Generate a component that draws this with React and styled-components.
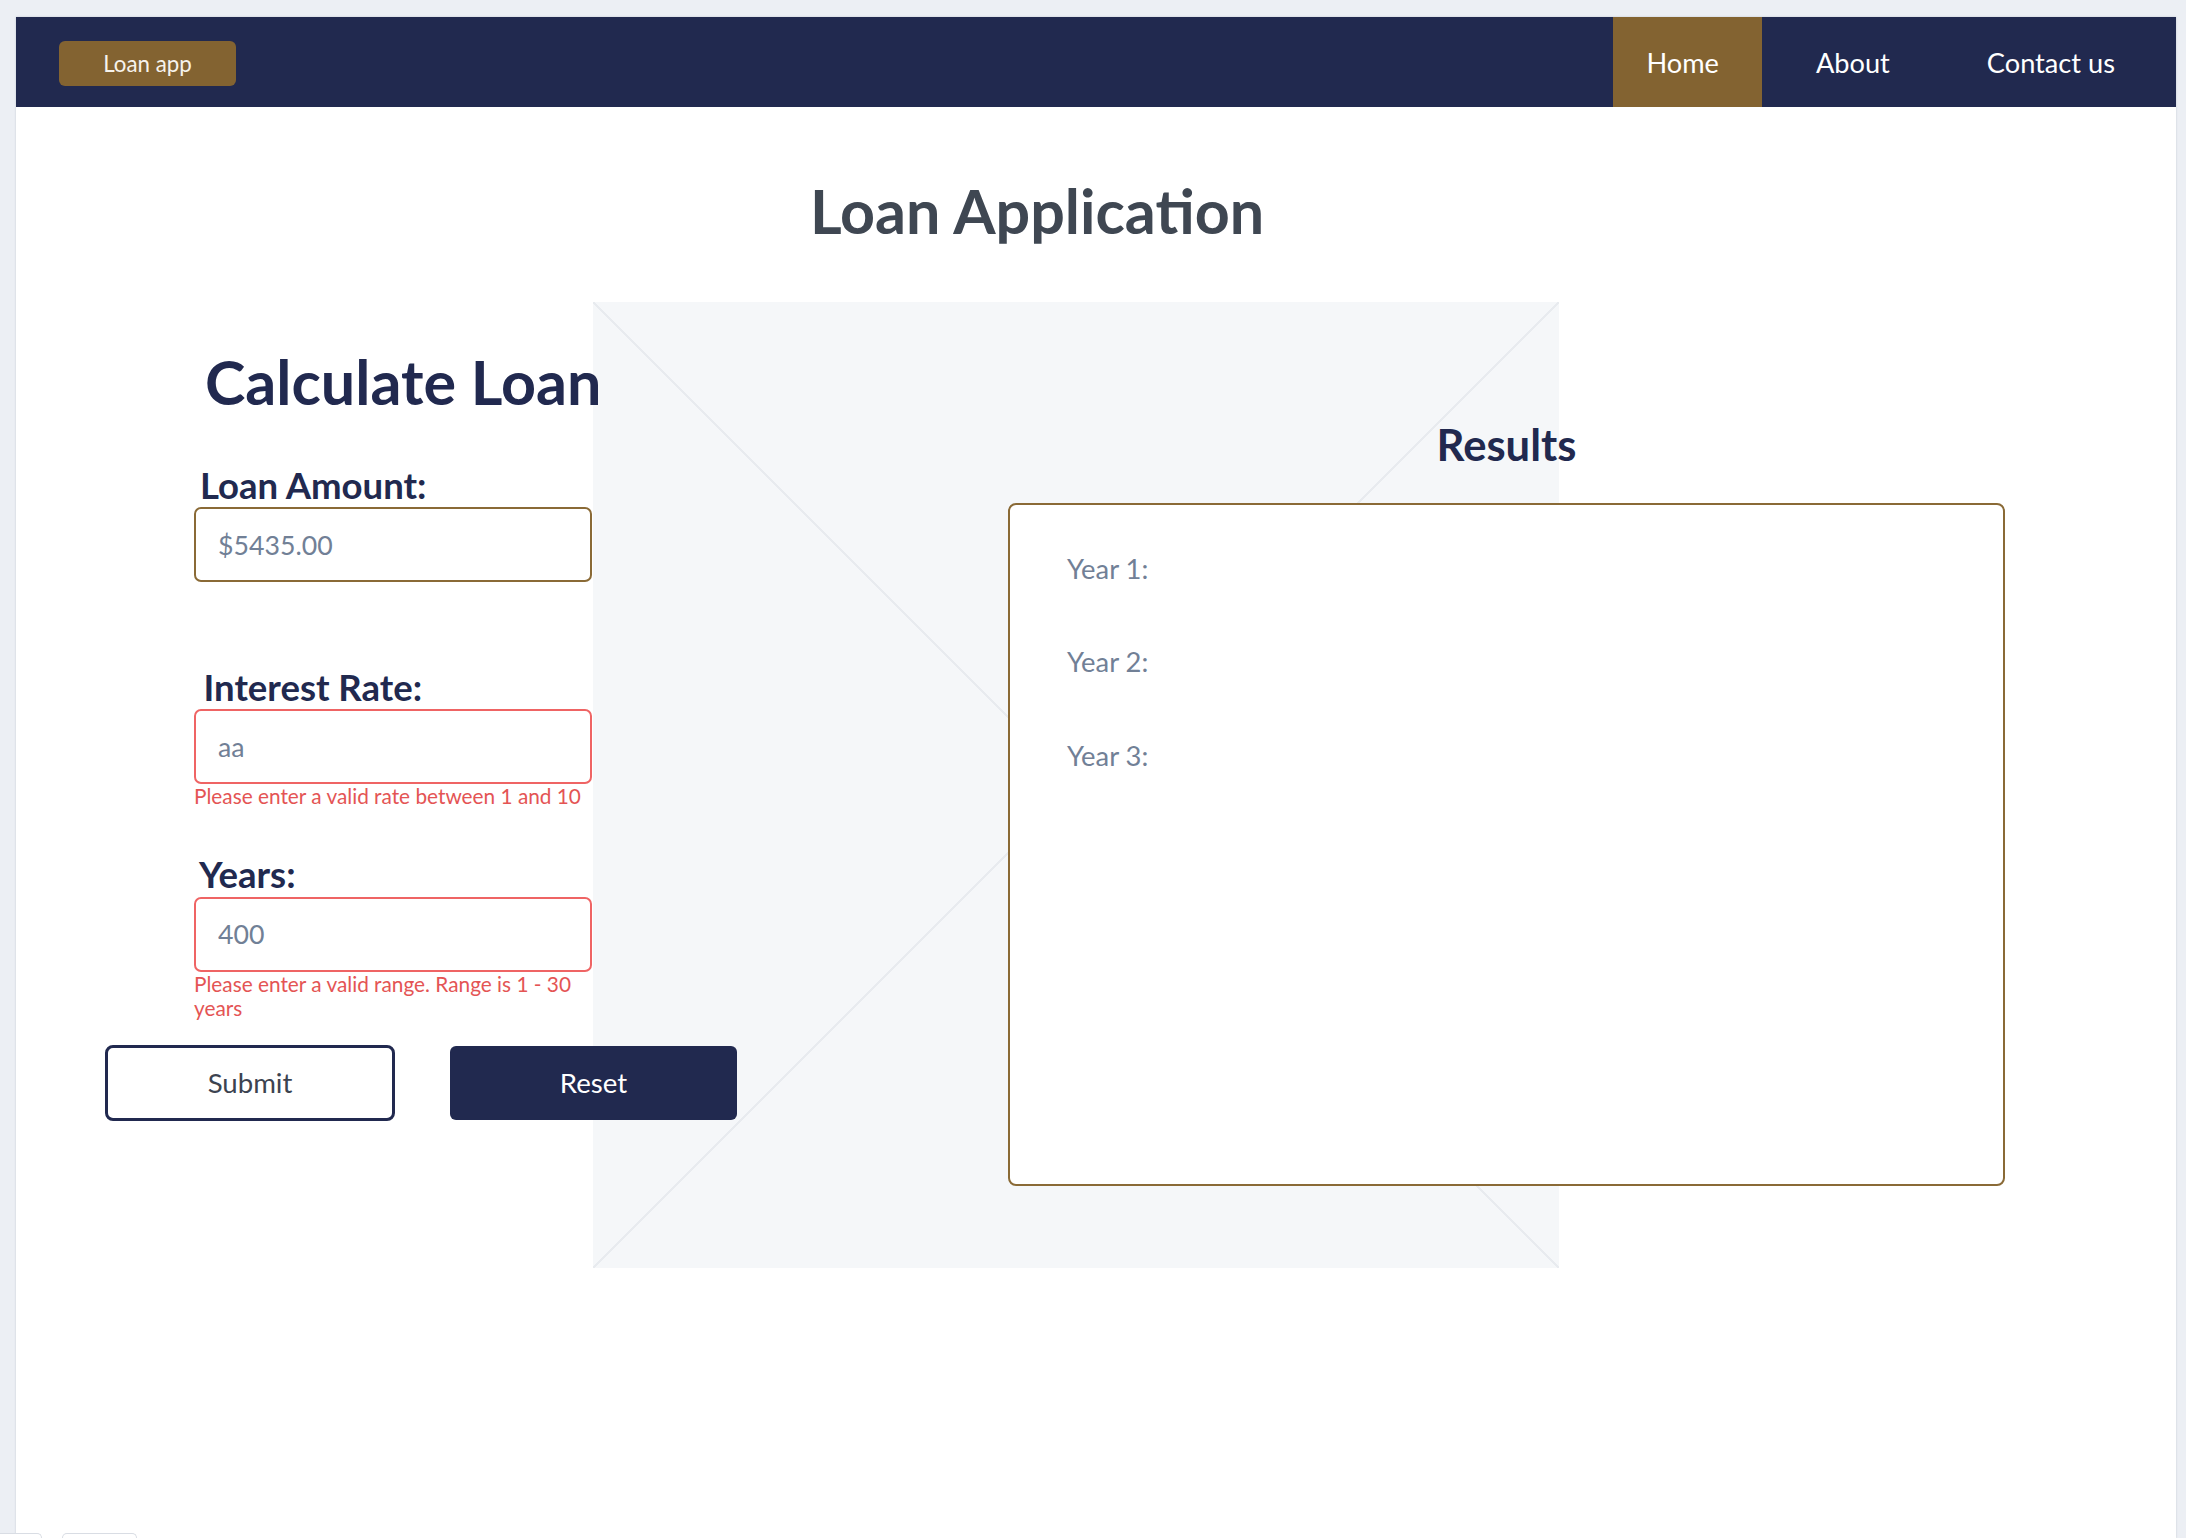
import React from 'react';
import styled, { createGlobalStyle } from 'styled-components';

const GlobalStyle = createGlobalStyle`
  html, body {
    margin: 0;
    padding: 0;
    background: #eceff4;
    overflow: hidden;
    font-family: Lato, "Noto Sans", sans-serif;
  }
  * {
    box-sizing: border-box;
  }
`

const Frame = styled.div`
  margin: 17px 0 0 16px;
  width: 2160px;
  min-height: 1521px;
  background: #fff;
  box-shadow: 0 0 2px rgba(40, 50, 80, 0.2);
`

const NavBar = styled.nav`
  display: flex;
  align-items: stretch;
  height: 90px;
  padding: 0 18px 0 43px;
  background: #21294f;
`

const Brand = styled.div`
  align-self: center;
  margin-top: 3px;
  width: 177px;
  height: 45px;
  display: flex;
  align-items: center;
  justify-content: center;
  border-radius: 6px;
  background: #836331;
  color: #f7f3ec;
  font-size: 22.3px;
`

const NavLinks = styled.ul`
  display: flex;
  gap: 21px;
  margin: 0 0 0 auto;
  padding: 0;
  list-style: none;
`

const NavLink = styled.li`
  display: flex;
  align-items: center;
  padding: 0 43px 0 33px;
  font-size: 27.2px;
  color: #fff;
  background: ${p => (p.$active ? '#836331' : 'transparent')};
`

const PageTitle = styled.h1`
  margin: 69px 0 0;
  padding-right: 118px;
  text-align: center;
  font-size: 61px;
  line-height: 69.6px;
  font-weight: 700;
  color: #3f4752;
`

// the grey placeholder picture with its cross sits behind both columns
const placeholder = `
  linear-gradient(to top right, transparent calc(50% - 1px), #e8ebef calc(50% - 1px), #e8ebef calc(50% + 1px), transparent calc(50% + 1px)) 577px 0 / 966px 966px no-repeat,
  linear-gradient(to bottom right, transparent calc(50% - 1px), #e8ebef calc(50% - 1px), #e8ebef calc(50% + 1px), transparent calc(50% + 1px)) 577px 0 / 966px 966px no-repeat,
  linear-gradient(#f5f7f9, #f5f7f9) 577px 0 / 966px 966px no-repeat
`

const Workspace = styled.main`
  display: grid;
  grid-template-columns: 903px 997px;
  align-items: start;
  margin-top: 56px;
  padding-left: 89px;
  min-height: 966px;
  background: ${placeholder};
`

const FormColumn = styled.form`
  display: flex;
  flex-direction: column;
  align-items: flex-start;
`

const FormTitle = styled.h2`
  margin: 45px 0 0 100px;
  font-size: 61px;
  line-height: 69.6px;
  font-weight: 700;
  color: #21294f;
`

const Field = styled.div`
  display: flex;
  flex-direction: column;
  width: 398px;
  margin: ${p => p.$top}px 0 0 89px;
`

const Label = styled.label`
  margin: 0 0 2px ${p => p.$indent}px;
  font-size: 36.5px;
  line-height: 40.8px;
  font-weight: 700;
  color: #21294f;
`

const Input = styled.input`
  width: 398px;
  height: 75px;
  padding: 0 22px;
  border: 2px solid ${p => (p.$invalid ? '#ef6464' : '#8a6a36')};
  border-radius: 7px;
  background: #fff;
  font-family: Lato, "Noto Sans", sans-serif;
  font-size: 26.7px;
  color: #718096;
  outline: none;
`

const ErrorText = styled.div`
  font-size: 20.8px;
  line-height: 24.5px;
  color: #e45454;
`

const Buttons = styled.div`
  display: flex;
  align-items: center;
  gap: 55px;
  margin-top: 24px;
`

const Button = styled.button`
  width: ${p => (p.$filled ? 287 : 290)}px;
  height: ${p => (p.$filled ? 74 : 76)}px;
  border: ${p => (p.$filled ? 'none' : '3px solid #21294f')};
  border-radius: ${p => (p.$filled ? 6 : 8)}px;
  background: ${p => (p.$filled ? '#21294f' : '#fff')};
  color: ${p => (p.$filled ? '#fff' : '#3c4350')};
  font-family: Lato, "Noto Sans", sans-serif;
  font-size: 27.6px;
  cursor: pointer;
`

const ResultsColumn = styled.section`
  display: flex;
  flex-direction: column;
`

const ResultsTitle = styled.h2`
  margin: 117.6px 0 0;
  text-align: center;
  font-size: 43.6px;
  line-height: 50.4px;
  font-weight: 700;
  color: #21294f;
`

const ResultsBox = styled.div`
  display: flex;
  flex-direction: column;
  gap: 62px;
  height: 683px;
  margin-top: 33px;
  padding: 48.5px 57px;
  border: 2px solid #8a6a36;
  border-radius: 8px;
  background: #fff;
`

const YearRow = styled.div`
  font-size: 27.4px;
  line-height: 31.2px;
  color: #718096;
`

const Tabs = styled.div`
  position: fixed;
  left: -10px;
  bottom: 0;
  display: flex;
  gap: 20px;
`

const Tab = styled.div`
  width: ${p => p.$w}px;
  height: 5px;
  border: 1px solid #d9dde4;
  border-bottom: none;
  border-radius: 6px 6px 0 0;
  background: #fff;
`

const fields = [
  { label: 'Loan Amount:', value: '$5435.00', indent: 6, top: 48.4 },
  { label: 'Interest Rate:', value: 'aa', indent: 9.5, top: 84.2, error: 'Please enter a valid rate between 1 and 10' },
  { label: 'Years:', value: '400', indent: 5, top: 45.2, error: 'Please enter a valid range. Range is 1 - 30 years' },
]

const App = () => {
  return (
    <>
      <GlobalStyle />
      <Frame>
        <NavBar>
          <Brand>Loan app</Brand>
          <NavLinks>
            <NavLink $active>Home</NavLink>
            <NavLink>About</NavLink>
            <NavLink>Contact us</NavLink>
          </NavLinks>
        </NavBar>
        <PageTitle>Loan Application</PageTitle>
        <Workspace>
          <FormColumn onSubmit={e => e.preventDefault()}>
            <FormTitle>Calculate Loan</FormTitle>
            {fields.map(f => (
              <Field key={f.label} $top={f.top}>
                <Label $indent={f.indent}>{f.label}</Label>
                <Input defaultValue={f.value} $invalid={!!f.error} />
                {f.error && <ErrorText>{f.error}</ErrorText>}
              </Field>
            ))}
            <Buttons>
              <Button type="submit">Submit</Button>
              <Button type="reset" $filled>Reset</Button>
            </Buttons>
          </FormColumn>
          <ResultsColumn>
            <ResultsTitle>Results</ResultsTitle>
            <ResultsBox>
              <YearRow>Year 1:</YearRow>
              <YearRow>Year 2:</YearRow>
              <YearRow>Year 3:</YearRow>
            </ResultsBox>
          </ResultsColumn>
        </Workspace>
      </Frame>
      <Tabs>
        <Tab $w={52} />
        <Tab $w={75} />
      </Tabs>
    </>
  );
}

export default App;
